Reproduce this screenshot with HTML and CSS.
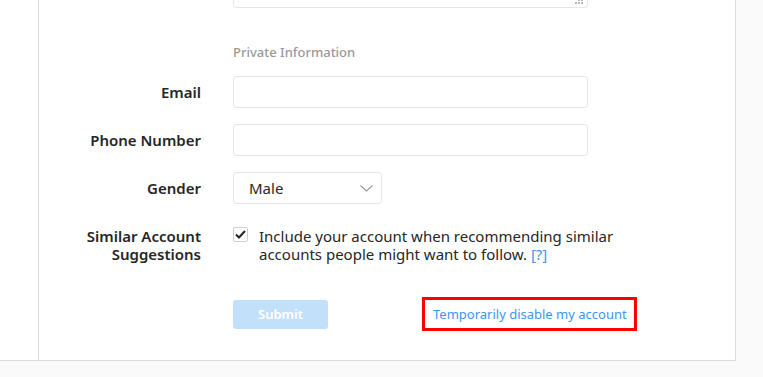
FILE: index.html
```html
<!DOCTYPE html>
<html lang="en">
<head>
    <meta charset="UTF-8">
    <meta name="viewport" content="width=device-width, initial-scale=1.0">
    <title>Edit Profile</title>
    <link rel="stylesheet" href="styles.css">
</head>
<body>
    <div class="card">
        <div class="side-nav"></div>
        <form class="edit-form">
            <div class="row row-bio">
                <aside class="label"></aside>
                <div class="field">
                    <div class="textarea-wrap">
                        <textarea class="text-area"></textarea>
                        <!-- resize grip -->
                        <svg class="grip" width="10" height="7" viewBox="0 0 10 7">
                            <rect x="4" y="0" width="2" height="2" fill="#b5b5b5"/>
                            <rect x="7" y="0" width="2" height="2" fill="#b5b5b5"/>
                            <rect x="1" y="3" width="2" height="2" fill="#b5b5b5"/>
                            <rect x="4" y="3" width="2" height="2" fill="#b5b5b5"/>
                            <rect x="7" y="3" width="2" height="2" fill="#b5b5b5"/>
                        </svg>
                    </div>
                </div>
            </div>

            <div class="row row-heading">
                <aside class="label"></aside>
                <div class="field">
                    <h2 class="section-title">Private Information</h2>
                </div>
            </div>

            <div class="row">
                <aside class="label"><label for="email">Email</label></aside>
                <div class="field"><input class="text-input" id="email" type="email"></div>
            </div>

            <div class="row">
                <aside class="label"><label for="phone">Phone Number</label></aside>
                <div class="field"><input class="text-input" id="phone" type="tel"></div>
            </div>

            <div class="row row-gender">
                <aside class="label"><label for="gender">Gender</label></aside>
                <div class="field">
                    <div class="select">
                        <span>Male</span>
                        <svg class="chevron" width="13" height="7" viewBox="0 0 13 7">
                            <path d="M0.5 0.5 L6.5 6 L12.5 0.5" fill="none" stroke="#999" stroke-width="1.1"/>
                        </svg>
                    </div>
                </div>
            </div>

            <div class="row row-check">
                <aside class="label"><label>Similar Account Suggestions</label></aside>
                <div class="field check-field">
                    <span class="check-box">
                        <svg width="11" height="9" viewBox="0 0 11 9">
                            <path d="M1 4.5 L4 7.5 L10 1" fill="none" stroke="#262626" stroke-width="2"/>
                        </svg>
                    </span>
                    <p class="check-text">Include your account when recommending similar accounts people might want to follow. <a href="#" class="help">[?]</a></p>
                </div>
            </div>

            <div class="row row-submit">
                <aside class="label"></aside>
                <div class="field submit-field">
                    <button type="button" class="btn-submit" disabled>Submit</button>
                    <a href="#" class="disable-link">Temporarily disable my account</a>
                </div>
            </div>
        </form>
    </div>
</body>
</html>
```

FILE: styles.css
```css
* {
    margin: 0;
    padding: 0;
    box-sizing: border-box;
}
body {
    background: #fafafa;
    font-family: "Noto Sans", "Open Sans", sans-serif;
    color: #262626;
}
.card {
    display: flex;
    width: 736px;
    margin-top: -52px;
    background: #fff;
    border-right: 1px solid #dbdbdb;
    border-bottom: 1px solid #dbdbdb;
}
.side-nav {
    width: 39px;
    flex: none;
    border-right: 1px solid #dbdbdb;
}
.edit-form {
    flex: 1;
    padding-bottom: 29px;
}
.row {
    display: flex;
    align-items: center;
    margin-bottom: 16px;
}
.label {
    width: 194px;
    flex: none;
    padding-right: 32px;
    text-align: right;
    font-size: 15px;
    font-weight: 600;
    line-height: 18px;
}
.field {
    flex: 1;
}
.row-bio {
    margin-bottom: 35px;
}
.textarea-wrap {
    position: relative;
    width: 355px;
}
.text-area {
    display: block;
    width: 355px;
    height: 60px;
    border: 1px solid #e6e6e6;
    border-radius: 3px;
    resize: none;
}
.grip {
    position: absolute;
    right: 4px;
    bottom: 2px;
}
.section-title {
    font-size: 13px;
    font-weight: 500;
    line-height: 18px;
    color: #999;
}
.row-heading {
    margin-bottom: 15px;
}
.text-input {
    display: block;
    width: 355px;
    height: 32px;
    border: 1px solid #e6e6e6;
    border-radius: 3px;
    background: #fff;
    padding: 0 10px;
    font: inherit;
}
.select {
    display: flex;
    align-items: center;
    justify-content: space-between;
    width: 149px;
    height: 32px;
    border: 1px solid #e6e6e6;
    border-radius: 3px;
    padding: 0 8px 0 15px;
    font-size: 15px;
}
.row-gender {
    margin-bottom: 23px;
}
.row-check {
    align-items: flex-start;
    margin-bottom: 34px;
}
.check-field {
    display: flex;
    align-items: flex-start;
}
.check-box {
    display: flex;
    align-items: center;
    justify-content: center;
    width: 15px;
    height: 15px;
    margin-right: 11px;
    border: 1px solid #cfcfcf;
    border-radius: 2px;
    flex: none;
}
.check-text {
    width: 362px;
    font-size: 15px;
    line-height: 18px;
}
.help {
    color: #3897f0;
    text-decoration: none;
}
.row-submit {
    margin-bottom: 0;
}
.submit-field {
    display: flex;
    align-items: center;
}
.btn-submit {
    width: 95px;
    height: 29px;
    border: none;
    border-radius: 3px;
    background: #c3e0fa;
    color: #fff;
    font: inherit;
    font-size: 13px;
    font-weight: 600;
}
.disable-link {
    margin-left: 94px;
    padding: 0 7px 0 8px;
    border: 3px solid #ff0000;
    line-height: 28px;
    font-size: 13px;
    color: #3897f0;
    text-decoration: none;
}
```
